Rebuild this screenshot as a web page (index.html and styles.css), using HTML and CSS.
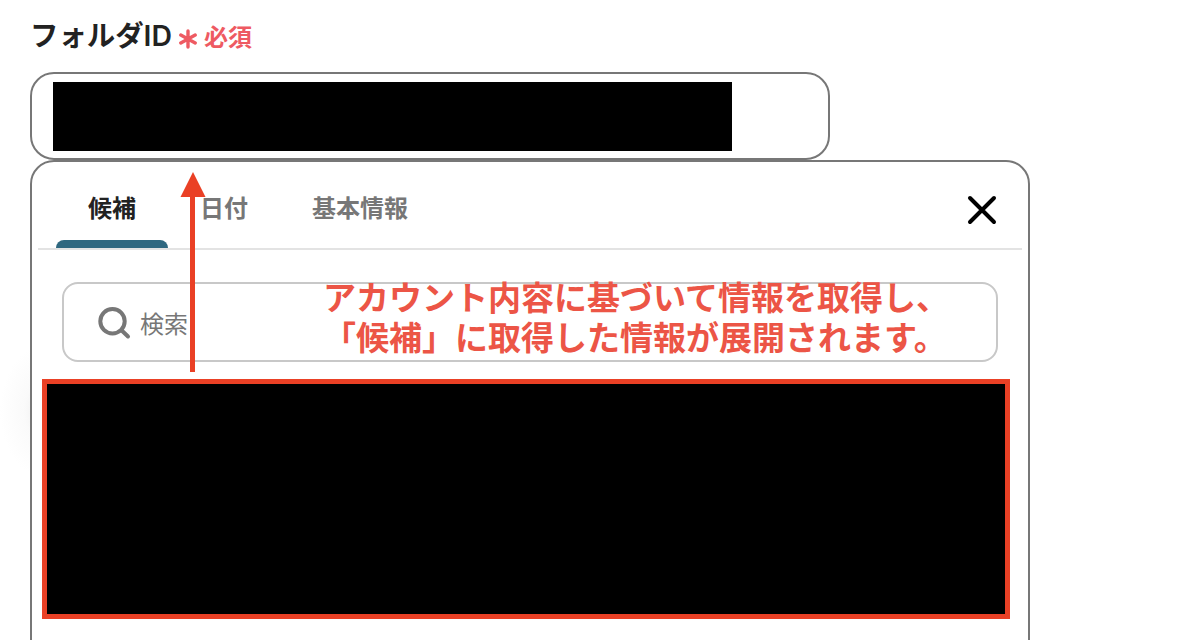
FILE: index.html
```
<!DOCTYPE html>
<html lang="ja">
<head>
  <meta charset="UTF-8">
  <meta name="viewport" content="width=device-width, initial-scale=1.0">
  <title>フォルダID</title>
  <link rel="stylesheet" href="styles.css">
</head>
<body>
  <div class="container">
    <!-- Field label -->
    <div class="field-label">
      <span class="label-text">フォルダID</span>
      <svg class="required-mark" width="18" height="20" viewBox="0 0 18 20">
        <path d="M9 2v16M1.800 6l14.400 8M16.200 6l-14.400 8" />
      </svg>
      <span class="required-text">必須</span>
    </div>

    <!-- Input with masked value -->
    <div class="field-input">
      <div class="masked-value"></div>
    </div>

    <!-- Suggestion panel -->
    <div class="panel">
      <div class="tabs">
        <div class="tab active">候補</div>
        <div class="tab">日付</div>
        <div class="tab">基本情報</div>
        <svg class="close-icon" width="30" height="30" viewBox="0 0 30 30">
          <path d="M3 3l24 24M27 3L3 27" />
        </svg>
      </div>

      <div class="search-box">
        <svg class="search-icon" width="34" height="34" viewBox="0 0 34 34">
          <circle cx="15.500" cy="15.200" r="12.200" />
          <path d="M24.500 24.200l6.500 6.300" />
        </svg>
        <span>検索</span>
      </div>

      <div class="masked-list"></div>
    </div>
  </div>

  <!-- Notes over the form -->
  <svg class="arrow" width="26" height="200" viewBox="0 0 26 200">
    <path d="M13 0l12.500 25H15v175h-5V25H.5z" />
  </svg>
  <p class="note">アカウント内容に基づいて情報を取得し、<br>「候補」に取得した情報が展開されます。</p>
</body>
</html>
```

FILE: styles.css
```
* {
  box-sizing: border-box;
}

body {
  position: relative;
  height: 640px;
  margin: 0;
  overflow: hidden;
  background: #fff radial-gradient(ellipse 44px 66px at 44px 411px, #ededed 0%, #fafafa 45%, #fff 100%) no-repeat;
  font-family: Inter, "Noto Sans CJK JP", sans-serif;
  color: #222;
}

.container {
  padding: 0 30px;
}

.field-label {
  display: flex;
  align-items: center;
  height: 72px;
}

.label-text {
  font-size: 28.4px;
  font-weight: 600;
  line-height: 40px;
}

.required-mark {
  margin: 5px 7px 0 7px;
  fill: none;
  stroke: #ee5a62;
  stroke-width: 3.4;
  stroke-linecap: round;
}

.required-text {
  margin-top: 4px;
  font-size: 24px;
  font-weight: bold;
  line-height: 36px;
  color: #ee5a62;
}

.field-input {
  width: 800px;
  height: 88px;
  padding: 8px 21px;
  border: 2px solid #777;
  border-radius: 24px;
  background-color: #fff;
}

.masked-value {
  width: 679px;
  height: 69px;
  background-color: #000;
}

.panel {
  width: 1000px;
  height: 500px;
  border: 2px solid #777;
  border-radius: 24px 24px 0 0;
  background-color: #fff;
}

.tabs {
  display: flex;
  height: 88px;
  margin: 0 6px;
  padding: 0 25px 0 18px;
  border-bottom: 2px solid #e3e3e3;
}

.tab {
  height: 86px;
  padding: 29px 32px 0;
  font-size: 24px;
  font-weight: bold;
  line-height: 36px;
  color: #777;
}

.tab.active {
  color: #222;
}

.tab.active::after {
  content: "";
  display: block;
  height: 8px;
  margin: 13px -32px 0;
  border-radius: 8px 8px 0 0;
  background-color: #2f6880;
}

.close-icon {
  margin: 33px 0 0 auto;
  fill: none;
  stroke: #000;
  stroke-width: 4;
  stroke-linecap: round;
}

.search-box {
  display: flex;
  align-items: center;
  width: 936px;
  height: 80px;
  margin: 32px 30px 0;
  padding: 2px 0 0 33px;
  border: 2px solid #c8c8c8;
  border-radius: 16px;
  font-size: 24px;
  line-height: 36px;
  color: #777;
}

.search-box span {
  margin-top: 3px;
}

.search-icon {
  margin-right: 9px;
  fill: none;
  stroke: #777;
  stroke-width: 4;
  stroke-linecap: round;
}

.masked-list {
  width: 968px;
  height: 240px;
  margin: 17px 0 0 10px;
  border: 5px solid #ea4025;
  background-color: #000;
}

.arrow {
  position: absolute;
  top: 172px;
  left: 180px;
  fill: #ea4025;
}

.note {
  position: absolute;
  top: 278px;
  left: 323px;
  margin: 0;
  font-size: 33px;
  font-weight: bold;
  line-height: 40px;
  white-space: nowrap;
  color: #ec5546;
}
```
